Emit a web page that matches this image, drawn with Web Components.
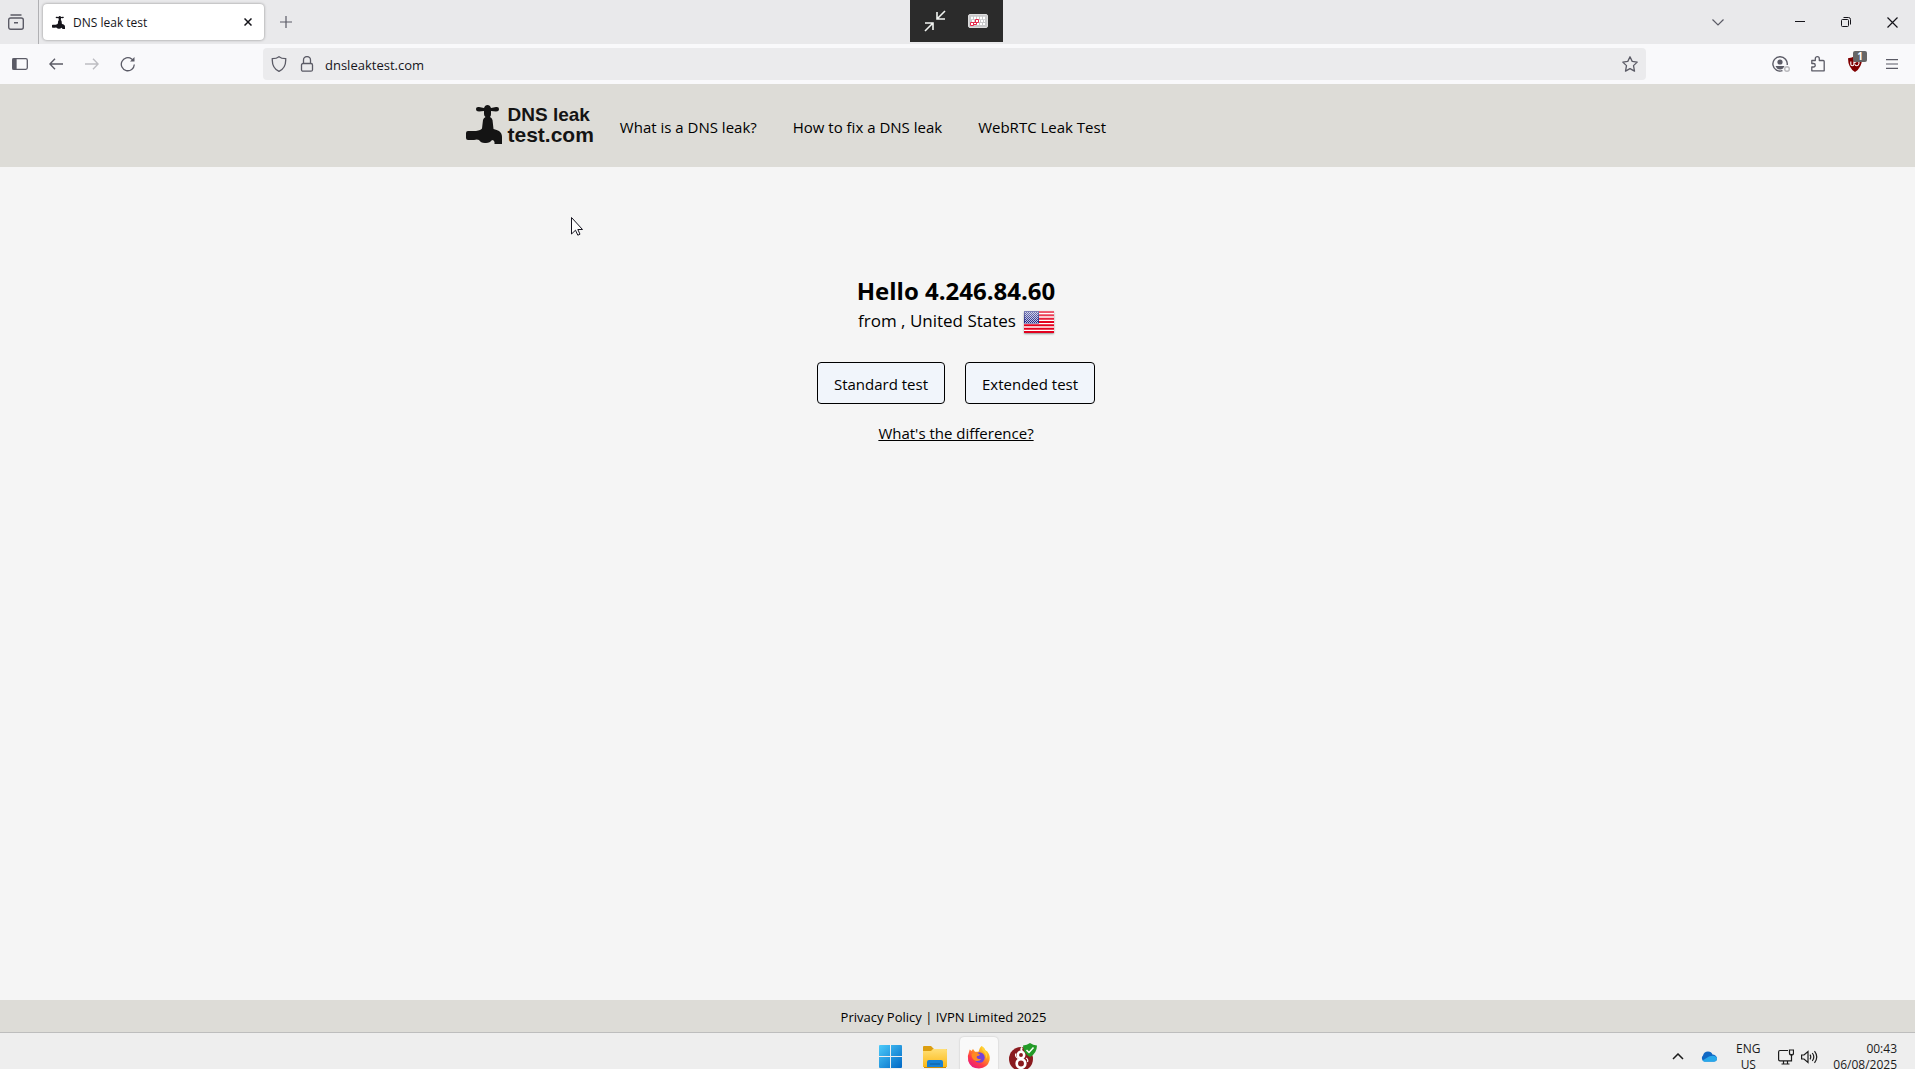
<!DOCTYPE html>
<html lang="en">
<head>
<meta charset="utf-8">
<title>DNS leak test</title>
<style>
html,body{margin:0;height:100%;overflow:hidden}
body{font-family:"Open Sans","Noto Sans",sans-serif;color:#000;background:#f5f5f5}
</style>
</head>
<body>
<desktop-screen></desktop-screen>
<script>
function define(name, css, html) {
  const t = document.createElement('template');
  t.innerHTML = '<style>:host,*{box-sizing:border-box}svg{display:block;flex:none}button{font:inherit;color:inherit;border:0;background:none;padding:0;margin:0}a{color:inherit;text-decoration:none}' + css + '</style>' + html;
  customElements.define(name, class extends HTMLElement {
    constructor() {
      super();
      this.attachShadow({mode: 'open'}).append(t.content.cloneNode(true));
    }
  });
}

const tap = '<path d="M10 4Q10 1.500 13 2L18 3Q19 0 21.500 0T25 3L30 2Q33 1.500 33 4T30 6.500L25 6V9Q25 11 24 12 26 13 26.500 15L27.500 24Q31 25 33 26 36 28 36 32V39H28.500V37Q28 35 26 35 24 38 20 38 15 38.500 13 35 11 34 8 35H2Q0 35 0 33V28Q0 26 2 26H10Q15 25 16 23.500L17 15Q17.500 13 19.500 12 18 11 18 9V6L13 6.500Q10 6.500 10 4z"/>';

define('icon-button', `
:host{display:block;flex:none}
button{display:grid;place-items:center;width:36px;height:36px;color:#5b5b66}
:host([wide]) button{width:46px}
:host([dark]) button{color:#15141a}
:host([faded]) button{color:#bdbdc2}
`, '<button type="button"><slot></slot></button>');

define('session-overlay', `
:host{display:flex;align-items:center;gap:22px;height:42px;padding:0 15px 0 14px;background:#2b2b2b}
:host{margin:0 2px 2px 0}
`, `
<button type="button" aria-label="Exit full screen"><svg width="22" height="22" viewBox="0 0 22 22" fill="none" stroke="#f2f5f2" stroke-width="1.600"><path d="M21 1l-8 8M13 2v7h8M1 21l8-8M1 13h8v7"/></svg></button>
<button type="button" aria-label="Keyboard"><svg width="20" height="14" viewBox="0 0 20 14"><rect x=".5" y=".5" width="19" height="13" rx="1.500" fill="#c9c9cb" stroke="#dcdcdc"/><path d="M3 4h14" stroke="#fff" stroke-width="2.600" stroke-dasharray="2 1"/><path d="M4 7h13M3 10h14" stroke="#fff" stroke-width="2.200" stroke-dasharray="2 1"/><path d="M7.500 5.500h3v3h-3zM2.500 8.500h3v3h-3zM5.500 8.500h3v2h-3z" fill="#fff" stroke="#e6294b"/></svg></button>`);

define('browser-tabs', `
:host{display:grid;grid-template-columns:1fr auto 1fr;height:44px;background:#e9e9eb}
.left,.right{display:flex;align-items:center;min-width:0}
.view{display:flex;align-items:center;width:39px;height:44px;padding-left:8px;border-right:1px solid #b0b0b3;color:#5b5b66}
.tab{display:flex;align-items:center;gap:8px;width:221px;height:36px;margin:0 4px;padding:0 12px 0 9px;border-radius:4px;background:#fff;box-shadow:0 0 3px #0006;font-size:12px;line-height:16px;color:#15141a}
.tab span{flex:1;padding-top:2px}
.right{justify-content:flex-end}
.all{margin-right:41px}
`, `
<div class="left">
 <button class="view" aria-label="Firefox View"><svg width="16" height="16" viewBox="0 0 16 16" fill="none" stroke="currentColor" stroke-width="1.400"><path d="M2.500 1h11M6 8.700h4"/><rect x=".7" y="4" width="14.600" height="11.300" rx="2"/></svg></button>
 <div class="tab"><svg width="13" height="13" viewBox="0 0 36 39" preserveAspectRatio="none" fill="#15141a">${tap}</svg><span>DNS leak test</span>
 <button aria-label="Close tab"><svg width="8" height="8" viewBox="0 0 8 8" stroke="#15141a" stroke-width="1.500"><path d="M.5.5l7 7M7.500.5l-7 7"/></svg></button></div>
 <icon-button><svg width="12" height="12" viewBox="0 0 12 12" stroke="currentColor" stroke-width="1.200"><path d="M0 6h12M6 0v12"/></svg></icon-button>
</div>
<session-overlay></session-overlay>
<div class="right">
 <icon-button class="all"><svg width="12" height="7" viewBox="0 0 12 7" fill="none" stroke="currentColor" stroke-width="1.200"><path d="M.5.5L6 6 11.500.5"/></svg></icon-button>
 <icon-button wide dark><svg width="10" height="10" viewBox="0 0 10 10" stroke="currentColor"><path d="M0 4.500h10"/></svg></icon-button>
 <icon-button wide dark><svg width="10" height="10" viewBox="0 0 10 10" fill="none" stroke="currentColor"><rect x=".5" y="2.500" width="7" height="7" rx="1"/><path d="M2.500.5H7.500a2 2 0 0 1 2 2V7.500"/></svg></icon-button>
 <icon-button wide dark><svg width="11" height="11" viewBox="0 0 11 11" stroke="currentColor" stroke-width="1.200"><path d="M.5.5l10 10M10.500.5l-10 10"/></svg></icon-button>
</div>`);

define('address-bar', `
:host{display:flex;align-items:center;gap:12px;flex:1;min-width:0;height:32px;padding:0 8px;border-radius:4px;background:#ebebed;color:#5b5b66}
input{flex:1;min-width:0;border:0;outline:0;padding:2px 0 0;margin-left:-2px;background:none;font:13px/20px "Open Sans","Noto Sans",sans-serif;color:#15141a;height:24px}
`, `
<svg width="16" height="16" viewBox="0 0 16 16" fill="none" stroke="currentColor" stroke-width="1.300"><path d="M8 .7C6.500 2 4 2.700 1.300 2.700 1 8 3 13 8 15.300 13 13 15 8 14.700 2.700 12 2.700 9.500 2 8 .7z"/></svg>
<svg width="16" height="16" viewBox="0 0 16 16" fill="none" stroke="currentColor" stroke-width="1.300"><rect x="2.500" y="7.500" width="11" height="7.700" rx="1.500"/><path d="M4.500 7.500V4a3.500 3.500 0 0 1 7 0v3.500"/></svg>
<input type="text" aria-label="Address" value="dnsleaktest.com" spellcheck="false">
<button type="button" aria-label="Bookmark"><svg width="16" height="16" viewBox="0 0 16 16" fill="none" stroke="currentColor" stroke-width="1.300" stroke-linejoin="round"><path d="M8 .8l2.200 4.600 5 .7-3.700 3.500 1 5.500L8 12.600l-4.500 2.500 1-5.500L.8 6.100l5-.7z"/></svg></button>`);

define('browser-toolbar', `
:host{display:flex;align-items:center;height:40px;padding:0 5px 0 2px;background:#f9f9fb}
.gap{flex:0 1 117px}
.tools{display:flex;gap:1px}
.ext{position:relative}
.badge{position:absolute;left:16px;top:5px;width:14px;height:11px;border-radius:2px;background:#666;color:#fff;font:bold 10px/11px "Open Sans",sans-serif;text-align:center}
`, `
<icon-button><svg width="16" height="12" viewBox="0 0 16 12" fill="none" stroke="currentColor" stroke-width="1.300"><rect x=".7" y=".7" width="14.600" height="10.600" rx="1.500"/><path d="M1 1h3v10H1z" fill="currentColor"/></svg></icon-button>
<icon-button><svg width="14" height="12" viewBox="0 0 14 12" fill="none" stroke="currentColor" stroke-width="1.400"><path d="M14 6H1M6 .7L.9 6 6 11.300"/></svg></icon-button>
<icon-button faded><svg width="14" height="12" viewBox="0 0 14 12" fill="none" stroke="currentColor" stroke-width="1.400"><path d="M0 6h13M8 .7L13.100 6 8 11.300"/></svg></icon-button>
<icon-button><svg width="16" height="16" viewBox="0 0 16 16" fill="none" stroke="currentColor" stroke-width="1.300"><path d="M14.300 8.500A6.500 6.500 0 1 1 11.700 3l1.800 1.500"/><path d="M14.500 1v4.500H10z" fill="currentColor" stroke="none"/></svg></icon-button>
<span class="gap"></span>
<address-bar></address-bar>
<span class="gap"></span>
<div class="tools">
<icon-button><svg width="18" height="16" viewBox="0 0 18 16" fill="none" stroke="currentColor" stroke-width="1.400"><path d="M10.500 14.700A7.200 7.200 0 1 1 15.200 9"/><circle cx="8" cy="6" r="2.600" fill="currentColor" stroke="none"/><path d="M3.500 10h9l-1.500 2.500q-3 2-6 0z" fill="currentColor" stroke="none"/><circle cx="15" cy="13" r="2.300" stroke="#b9b9bd"/></svg></icon-button>
<icon-button><svg width="14" height="16" viewBox="0 0 14 16" fill="none" stroke="currentColor" stroke-width="1.300" stroke-linejoin="round"><path d="M.8 4.500h3.500V2.700a2 2 0 0 1 4 0v1.800h3.900q1 0 1 1v9.300H.8V11h1.700a1.700 1.700 0 0 0 0-3.500H.8z"/></svg></icon-button>
<icon-button class="ext"><svg width="16" height="16" viewBox="0 0 16 16"><path d="M8 0q3 2 7 2.300 0 9.500-7 13.700Q1 11.800 1 2.300 5 2 8 0z" fill="#800000"/><path d="M3.800 5.500v2.700q0 1.500 1.500 1.500t1.600-1.500V5.500M8 8.200q0 1.500 1.800 1.500t2.200-2.200-2-2-2 1.700" fill="none" stroke="#fff" stroke-width="1.100"/></svg><span class="badge">1</span></icon-button>
<icon-button><svg width="12" height="10" viewBox="0 0 12 10" stroke="currentColor" stroke-width="1.200"><path d="M0 .6h12M0 5h12M0 9.400h12"/></svg></icon-button>
</div>`);

define('site-logo', `
:host{display:block}
a{display:flex;gap:6px;color:#141414}
.name{display:block;font-family:"Liberation Sans",Arial,sans-serif;font-weight:bold;font-size:19px;line-height:20px}
.name b,.name span{display:block}
.name span{font-size:21px}
`, `<a href="#"><svg width="36" height="39" viewBox="0 0 36 39" fill="#141414">${tap}</svg><span class="name"><b>DNS leak</b><span>test.com</span></span></a>`);

define('site-header', `
:host{display:block;background:#dddcd7}
.in{display:flex;align-items:center;gap:26px;width:100%;max-width:984px;height:83px;margin:0 auto;padding-bottom:1px}
nav{display:flex;gap:36px;font-size:15px;line-height:24px;padding-top:3px}
`, `<div class="in"><site-logo></site-logo><nav><a href="#">What is a DNS leak?</a><a href="#">How to fix a DNS leak</a><a href="#">WebRTC Leak Test</a></nav></div>`);

define('us-flag', ':host{display:block;flex:none;border-radius:1px;box-shadow:0 1px 2px #0006}', `
<svg width="30" height="22" viewBox="0 0 30 22" role="img" aria-label="United States"><defs><linearGradient id="g" x2="0" y2="1"><stop stop-color="#fff" stop-opacity=".4"/><stop offset=".5" stop-color="#fff" stop-opacity="0"/></linearGradient><pattern id="p" width="2" height="2" patternUnits="userSpaceOnUse"><path d="M0 0h1v1H0zM1 1h1v1H1z" fill="#b9bce2"/></pattern></defs>
<path fill="#fff" d="M0 0h30v22H0z"/><path stroke="#e3001f" stroke-width="1.900" d="M0 1h30M0 4.300h30M0 7.700h30M0 11h30M0 14.300h30M0 17.700h30M0 21h30"/><path fill="#262b85" d="M0 0h15v12.500H0z"/><path fill="url(#p)" d="M1 1h13v11H1z"/><path fill="url(#g)" d="M0 0h30v22H0z"/></svg>`);

define('leak-test', `
:host{display:flex;flex-direction:column;align-items:center;flex:1;min-height:0;padding:107px 3px 0 0;background:#f5f5f5}
h1{margin:0;font-size:24px;line-height:34px;font-weight:bold}
.from{display:flex;align-items:center;gap:8px;font-size:17px;line-height:26px}
.from us-flag{margin-top:2px}
.tests{display:flex;gap:20px;margin:28px 0 15px}
.tests button{height:42px;padding:1px 16px 0;border:1px solid #000;border-radius:4px;background:#f1f5fb;font-size:15px;line-height:24px}
.diff{font-size:15px;line-height:28px;text-decoration:underline}
`, `<h1>Hello 4.246.84.60</h1>
<div class="from"><span>from , United States</span><us-flag></us-flag></div>
<div class="tests"><button type="button">Standard test</button><button type="button">Extended test</button></div>
<a class="diff" href="#">What's the difference?</a>`);

define('site-footer', `
:host{display:block;height:32px;padding:2px 28px 0 0;background:#dddcd7;text-align:center;font-size:13px;line-height:30px}
`, `<a href="#">Privacy Policy</a> | <a href="#">IVPN Limited 2025</a>`);

define('task-bar', `
:host{display:grid;grid-template-columns:1fr auto 1fr;align-items:center;height:48px;border-top:1px solid #bdbdbd;background:#eee;font-size:12px;line-height:16px;color:#1b1b1b;flex:none}
.apps{display:flex;gap:6px;grid-column:2;padding-right:2px}
.apps button{display:grid;place-items:center;width:38px;height:40px;border-radius:4px}
.apps .on{background:#f9f9f9;box-shadow:0 0 2px #0003}
.tray{display:flex;align-items:center;justify-content:flex-end;padding-right:18px}
.lang{width:36px;text-align:center;margin:0 12px 0 13px}
.clock{text-align:right;margin-left:15px}
.cloud{margin-left:17px}.vol{margin-left:7px}
`, `
<div class="apps">
<button aria-label="Start"><svg width="23" height="23" viewBox="0 0 23 23"><defs><linearGradient id="w" x2="1" y2="1"><stop stop-color="#4ccbfa"/><stop offset="1" stop-color="#0067c5"/></linearGradient></defs><path fill="url(#w)" d="M1 0h10v11H0V1q0-1 1-1zM12 0h10q1 0 1 1v10H12zM0 12h11v11H1q-1 0-1-1zM12 12h11v10q0 1-1 1H12z"/></svg></button>
<button aria-label="File Explorer"><svg width="24" height="22" viewBox="0 0 24 22"><defs><linearGradient id="f" x2="0" y2="1"><stop stop-color="#ffdf76"/><stop offset="1" stop-color="#fbb816"/></linearGradient></defs><path d="M0 1q0-1 1-1h7l3 3h12q1 0 1 1v4H0z" fill="#dc9e10"/><path d="M0 5h8l2-2h13q1 0 1 1v17H0z" fill="url(#f)"/><path d="M4 21v-5q0-2 2-2h12q2 0 2 2v5z" fill="#1680d5"/><path d="M7 18h10" stroke="#0a5a9c"/><path d="M1 21.500h22" stroke="#c98b0a"/></svg></button>
<button class="on" aria-label="Firefox"><svg width="24" height="24" viewBox="0 0 24 24"><defs><linearGradient id="x" x1=".9" y1="0" x2=".2" y2="1"><stop stop-color="#ffec3d"/><stop offset=".35" stop-color="#ffa61c"/><stop offset=".7" stop-color="#ff3b47"/><stop offset="1" stop-color="#e21587"/></linearGradient></defs><path fill="url(#x)" d="M14.500 1q3 1.500 4 4.500 2 .5 2.500 2 2.500 3.500 1.500 8Q20.500 23 12 23.500 3.500 23.500 1.200 16 0 11 2 7l.7-2.500L4.500 6 6 4l2 2.800h3.500Q12 3 14.500 1z"/><circle cx="12.500" cy="12.500" r="5.200" fill="#7542d8"/><path fill="#ff8a22" d="M4.500 9Q7 6.500 10.500 8l2.500 1.500q-.5 1.500-3 1.500-1 1.500.5 2.500 2 1 4 0Q13 16.500 9 16q-4.500-1.500-4.500-7z"/><path fill="#ffd139" d="M14.500 1q0 4 2.500 6 2.500 2.500 2 7 2.500-4-.5-8.500Q17.500 2.500 14.500 1z"/></svg></button>
<button aria-label="Secure browser"><svg width="28" height="28" viewBox="0 0 28 28"><circle cx="12" cy="16" r="12" fill="#8a1a1e"/><path d="M13 4.500q-1.500 2 0 4" fill="none" stroke="#fff" stroke-width="1.800"/><circle cx="12" cy="12" r="3.200" fill="none" stroke="#fff" stroke-width="2.500"/><circle cx="12" cy="20.500" r="4.300" fill="none" stroke="#fff" stroke-width="2.700"/><path d="M7 10.500q-1.500 3 2 5M17 15q2.500 1 1.500 4" fill="none" stroke="#fff" stroke-width="1.200"/><path d="M21 0q3 2 7 2.500-.2 8-7 11.500Q14.200 10.500 14 2.500 18 2 21 0z" fill="#229a27"/><path d="M17.500 7l2.500 2.500 4.500-5" fill="none" stroke="#fff" stroke-width="1.500"/></svg></button>
</div>
<div class="tray">
<button aria-label="Show hidden icons"><svg width="12" height="7" viewBox="0 0 12 7" fill="none" stroke="#1b1b1b" stroke-width="1.500"><path d="M1 6l5-5 5 5"/></svg></button>
<svg class="cloud" width="16" height="11" viewBox="0 0 16 11"><path d="M3.500 10.500A3.500 3.500 0 0 1 2 4.500Q3 .5 7 .500 10.500.5 11.500 3.500q3.500 0 4.500 3.500 0 3.500-3 3.500z" fill="#1068c4"/><path d="M1.500 9.500L8 5.500q6-2 8 1.500.3 3.500-3 3.800H4q-1.500 0-2.500-1.300z" fill="#28a8ea"/></svg>
<div class="lang">ENG<br>US</div>
<svg width="16" height="16" viewBox="0 0 16 16" fill="none" stroke="#1b1b1b" stroke-width="1.200"><path d="M10 1.500H2q-1.400 0-1.400 1.400v7.600q0 1.400 1.400 1.400h11.500V7M3.500 15h8M5.500 12v3M9.500 12v3M13.500 7V5"/><path d="M11.500 1h4v3q0 2-2 2t-2-2z"/></svg>
<svg class="vol" width="17" height="14" viewBox="0 0 17 14" fill="none" stroke="#1b1b1b" stroke-width="1.200"><path d="M.6 5v4H3l4 3.500v-11L3 5zM9 4.700q1.500 2.300 0 4.600M11.300 3q3 4 0 8M13.500 1.200q4.500 5.800 0 11.600"/></svg>
<div class="clock">00:43<br>06/08/2025</div>
</div>`);

define('mouse-pointer', ':host{display:block;position:absolute;left:571px;top:217px;pointer-events:none}', `<svg width="12" height="19" viewBox="0 0 12 19"><path d="M.5.500v16.500l4-3.800 2.300 5 2.200-1-2.200-4.700h4.700z" fill="#fff" stroke="#15141f"/></svg>`);

/* The task bar runs 11px past the bottom edge of the window. */
define('desktop-screen', ':host{display:flex;flex-direction:column;height:calc(100vh + 11px)}', `
<browser-tabs></browser-tabs><browser-toolbar></browser-toolbar>
<site-header></site-header><leak-test></leak-test><site-footer></site-footer>
<task-bar></task-bar><mouse-pointer></mouse-pointer>`);
</script>
</body>
</html>
